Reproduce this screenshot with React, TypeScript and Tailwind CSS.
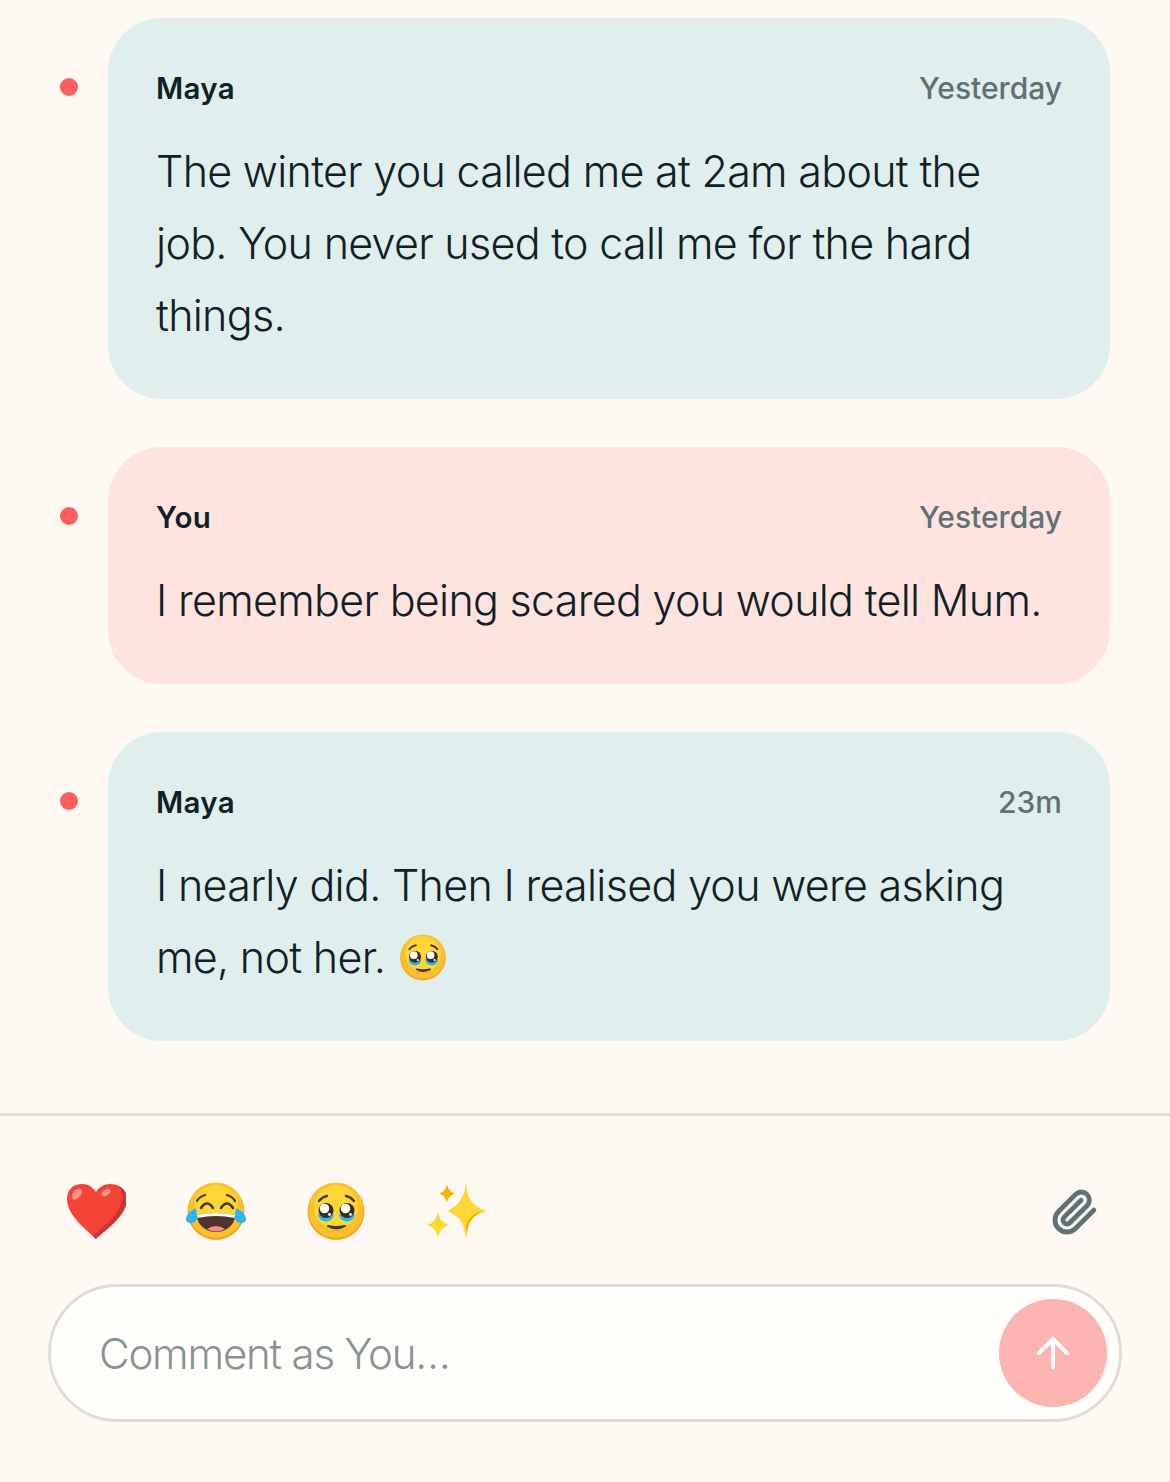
import { ArrowUp } from "lucide-react";

type Comment = { id: number; author: string; time: string; text: string; mine?: boolean; emoji?: boolean };

const comments: Comment[] = [
  { id: 1, author: "Maya", time: "Yesterday", text: "The winter you called me at 2am about the job. You never used to call me for the hard things." },
  { id: 2, author: "You", time: "Yesterday", text: "I remember being scared you would tell Mum.", mine: true },
  { id: 3, author: "Maya", time: "23m", text: "I nearly did. Then I realised you were asking me, not her.", emoji: true },
];

function HeartEmoji() {
  return (
    <svg viewBox="0 0 60 60" className="h-[60px] w-[60px]">
      <path d="M30 57 C22 49 1 34 1 17 C1 7 8 2 16 2 C22 2 27 5 30 10 C33 5 38 2 44 2 C52 2 61 7 61 17 C61 34 38 49 30 57 Z" fill="#f44336" />
      <path d="M53 4 C58 7 61 11 61 17 C61 34 38 49 30 57 C29 56 28 55 27 54 C36 46 54 33 56 17 C56.600 12 55.500 8 53 4 Z" fill="#cc3333" />
      <ellipse cx="11" cy="12" rx="4" ry="6.500" transform="rotate(38 11 12)" fill="#f88f8a" />
      <ellipse cx="40" cy="10.500" rx="5" ry="3" transform="rotate(-35 40 10.500)" fill="#f88f8a" />
    </svg>
  );
}

function LaughEmoji() {
  return (
    <svg viewBox="0 0 64 60" className="mx-[-2px] h-[60px] w-[64px]">
      <circle cx="32" cy="29.500" r="28.500" fill="#f5a623" />
      <circle cx="32" cy="28" r="27.500" fill="#fbc02d" />
      <circle cx="32" cy="25" r="22" fill="#fdd835" />
      <path d="M13 19 Q15 15 21 13 M51 19 Q49 15 43 13" fill="none" stroke="#4e342e" strokeWidth="2.200" strokeLinecap="round" />
      <path d="M17 26 Q23 17 29 26 M37 26 Q43 17 49 26" fill="none" stroke="#4e342e" strokeWidth="2.600" strokeLinecap="round" />
      <path d="M13 33 Q32 29 51 33 C51 43 42 50 32 50 C22 50 13 43 13 33 Z" fill="#4e342e" />
      <path d="M13 33 Q32 29 51 33 L50.500 36 Q32 32 13.500 36 Z" fill="#ffffff" />
      <path d="M23 47 Q32 41 41 47 Q32 52 23 47 Z" fill="#f48a8a" />
      <path d="M12 26 Q13 31 13 36 C12 42 4 43 2 38 C1 34 7 28 12 26 Z" fill="#29b6f6" />
      <path d="M52 26 Q51 31 51 36 C52 42 60 43 62 38 C63 34 57 28 52 26 Z" fill="#29b6f6" />
    </svg>
  );
}

function PleadingEmoji({ size = "h-[60px] w-[60px]" }: { size?: string }) {
  return (
    <svg viewBox="0 0 60 60" className={size}>
      <circle cx="30" cy="29.500" r="28.500" fill="#f5a623" />
      <circle cx="30" cy="28" r="27.500" fill="#fbc02d" />
      <circle cx="30" cy="25" r="22" fill="#fdd835" />
      <path d="M13 19 Q16 15 21 14 M48 19 Q45 15 40 14" fill="none" stroke="#4e342e" strokeWidth="2.400" strokeLinecap="round" />
      <path d="M12 32 A8 7.500 0 0 0 28 32 Z" fill="#29b6f6" />
      <path d="M33 32 A8 7.500 0 0 0 49 32 Z" fill="#29b6f6" />
      <circle cx="20" cy="28.500" r="7.500" fill="#3e2723" />
      <circle cx="41" cy="28.500" r="7.500" fill="#3e2723" />
      <circle cx="18.500" cy="26.500" r="4.800" fill="#ffffff" />
      <circle cx="39.500" cy="26.500" r="4.800" fill="#ffffff" />
      <circle cx="23.500" cy="32.500" r="1.400" fill="#ffffff" />
      <circle cx="44.500" cy="32.500" r="1.400" fill="#ffffff" />
      <path d="M22 44 Q30 49 39 44 Q30 46 22 44 Z" fill="#4e342e" stroke="#4e342e" strokeWidth="2" strokeLinejoin="round" />
    </svg>
  );
}

function SparklesEmoji() {
  return (
    <svg viewBox="0 0 60 60" className="h-[60px] w-[60px]">
      <path d="M40 1 C41 15 45 23 60 29 C45 33 42 41 40 57 C38 41 34 34 21 29 C34 23 38 15 40 1 Z" fill="#fdd835" />
      <path d="M40 57 C42 41 45 33 60 29 C49 30 43 34 40 43 Z" fill="#f9b400" />
      <path d="M12 29 C13 37 16 40 23 43 C16 45 14 49 12 56 C10 49 8 45 1 43 C8 40 11 37 12 29 Z" fill="#fdd835" />
      <path d="M21 2 C22 7 24 10 29 11.500 C24 13 22 16 21 21 C20 16 18 13 13 11.500 C18 10 20 7 21 2 Z" fill="#f9b400" />
    </svg>
  );
}

function PaperclipIcon() {
  return (
    <svg viewBox="0 0 24 24" className="h-[48px] w-[48px]" fill="none" stroke="#5f7175" strokeWidth="2.400" strokeLinecap="round" strokeLinejoin="round">
      <path d="m21.44 11.05-9.19 9.19a6 6 0 0 1-8.49-8.49l8.57-8.57A4 4 0 1 1 18 8.840l-8.590 8.570a2 2 0 0 1-2.830-2.830l8.490-8.480" />
    </svg>
  );
}

export default function App() {
  return (
    <main
      className="min-h-screen bg-[#fff9f4] pt-[18px] text-[#0f2127]"
      style={{ fontFamily: "Inter, 'Open Sans', sans-serif" }}
    >
      <div className="flex flex-col gap-12 pl-[60px] pr-[60px]">
        {comments.map((comment) => (
          <div key={comment.id} className="flex items-start gap-[30px]">
            <span className="mt-[60px] h-[18px] w-[18px] shrink-0 rounded-full bg-[#ff5f5c]" />
            <article className={`flex-1 rounded-[54px] p-12 ${comment.mine ? "bg-[#ffe3df]" : "bg-[#e0eeed]"}`}>
              <div className="flex h-[45px] items-center justify-between">
                <span className="text-[29.5px] font-semibold tracking-[0.3px]">{comment.author}</span>
                <span className="text-[30px] font-medium text-[#5f7175]">{comment.time}</span>
              </div>
              <p className="mt-6 pr-[8px] text-[43px] font-[350] leading-[72px] tracking-[-0.7px]">
                {comment.text}
                {comment.emoji ? (
                  <span className="ml-[14px] inline-block align-[-9px]">
                    <PleadingEmoji size="h-[48px] w-[48px]" />
                  </span>
                ) : null}
              </p>
            </article>
          </div>
        ))}
      </div>

      <div className="mt-[72px] border-t-[3px] border-[#e4dfd9] px-12 pt-[66px]">
        <div className="flex items-center justify-between pl-[18px] pr-[23px]">
          <div className="flex items-center gap-[60px]">
            <HeartEmoji />
            <LaughEmoji />
            <PleadingEmoji />
            <SparklesEmoji />
          </div>
          <PaperclipIcon />
        </div>
        <div className="mt-[42px] flex h-[138px] items-center justify-between rounded-full border-[3px] border-[#e0dbd5] bg-[#fffefb] pl-12 pr-3">
          <span className="text-[42px] font-[350] tracking-[-1.200px] text-[#879294]">Comment as You…</span>
          <button className="flex h-[108px] w-[108px] items-center justify-center rounded-full bg-[#fbb4b0] text-white">
            <ArrowUp size={48} strokeWidth={2} />
          </button>
        </div>
      </div>
    </main>
  );
}
